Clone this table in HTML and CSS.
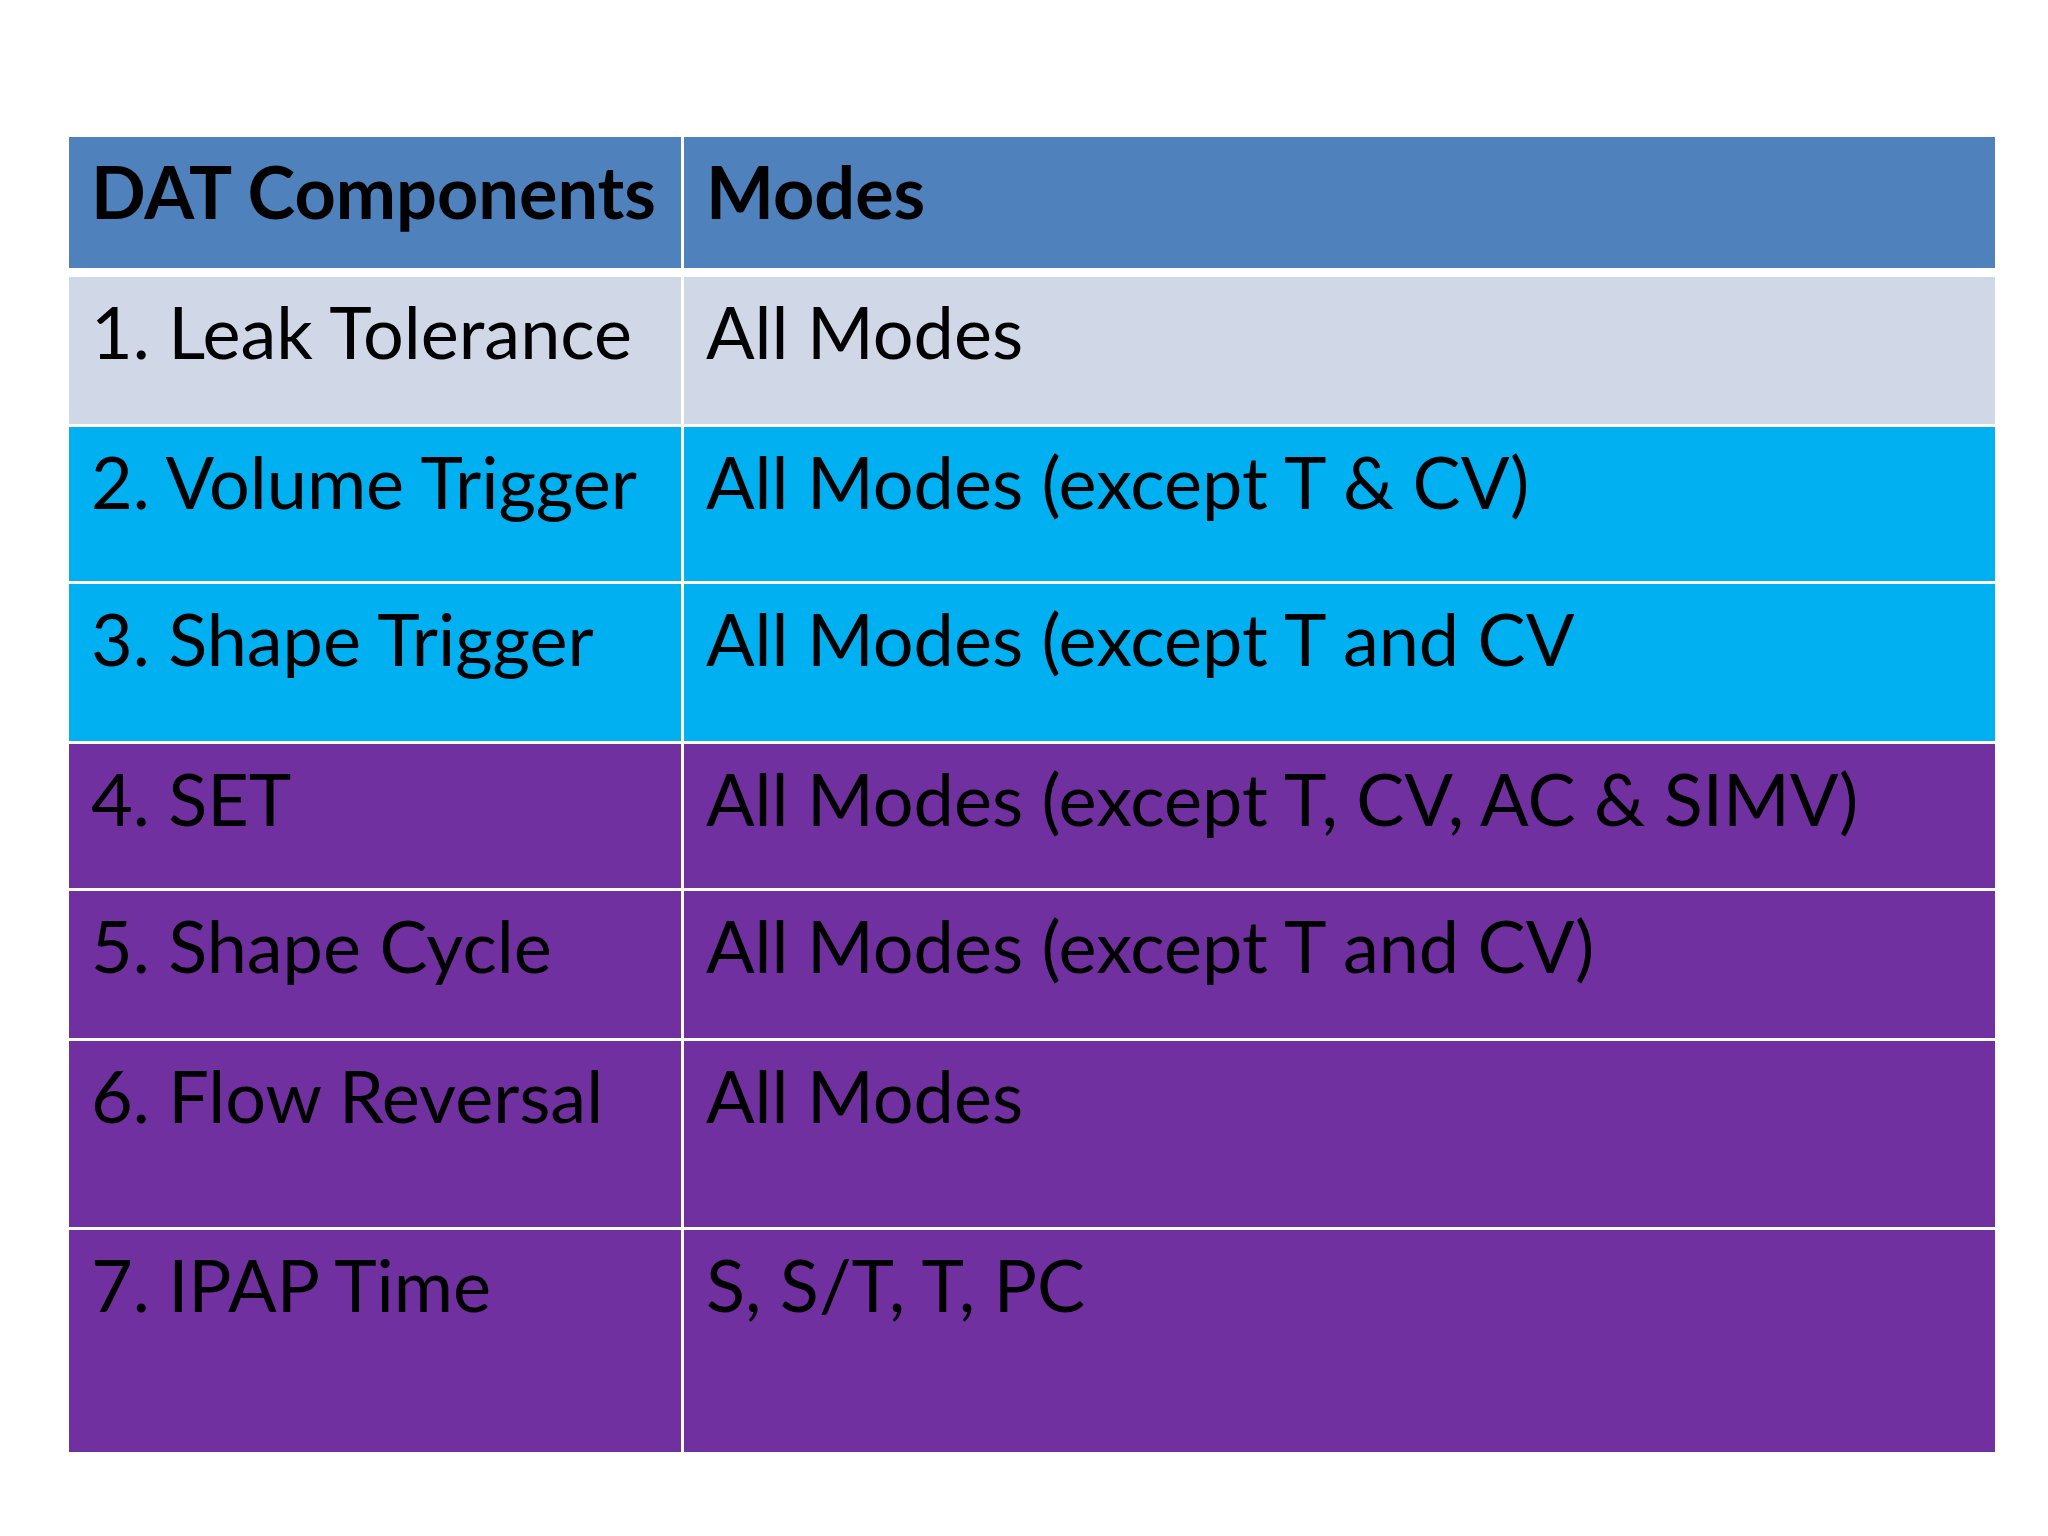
FILE: index.html
```html
<!DOCTYPE html>
<html lang="en">
<head>
<meta charset="utf-8">
<title>DAT Components</title>
<link rel="stylesheet" href="styles.css">
</head>
<body>
<div class="table">
  <div class="row head h-head">
    <div class="cell">DAT Components</div>
    <div class="cell">Modes</div>
  </div>
  <div class="row light h-1">
    <div class="cell">1. Leak Tolerance</div>
    <div class="cell">All Modes</div>
  </div>
  <div class="row cyan h-2">
    <div class="cell">2. Volume Trigger</div>
    <div class="cell">All Modes (except T &amp; CV)</div>
  </div>
  <div class="row cyan h-3">
    <div class="cell">3. Shape Trigger</div>
    <div class="cell">All Modes (except T and CV</div>
  </div>
  <div class="row purple h-4">
    <div class="cell">4. SET</div>
    <div class="cell">All Modes (except T, CV, AC &amp; SIMV)</div>
  </div>
  <div class="row purple h-5">
    <div class="cell">5. Shape Cycle</div>
    <div class="cell">All Modes (except T and CV)</div>
  </div>
  <div class="row purple h-6">
    <div class="cell">6. Flow Reversal</div>
    <div class="cell">All Modes</div>
  </div>
  <div class="row purple h-7">
    <div class="cell">7. IPAP Time</div>
    <div class="cell">S, S/T, T, PC</div>
  </div>
</div>
</body>
</html>
```
FILE: styles.css
```css
html, body {
  margin: 0;
  padding: 0;
  background: #ffffff;
}
body {
  padding: 137px 0 0 69px;
  font-family: "Lato", "Liberation Sans", sans-serif;
  color: #000;
}
.table {
  width: 1926px;
  display: flex;
  flex-direction: column;
  gap: 3px;
}
.row {
  display: grid;
  grid-template-columns: 612px 1311px;
  column-gap: 3px;
}
.cell {
  font-size: 72px;
  line-height: 86px;
  padding: 11px 0 0 22px;
  white-space: nowrap;
}
.head .cell { background: #4f81bd; font-weight: 700; }
.light .cell { background: #d0d8e8; }
.cyan .cell { background: #00b0f0; }
.purple .cell { background: #7030a0; }
.h-head { height: 131px; margin-bottom: 6px; }
.h-1 { height: 147px; }
.h-2 { height: 154px; }
.h-3 { height: 157px; }
.h-4 { height: 144px; }
.h-5 { height: 147px; }
.h-6 { height: 186px; }
.h-7 { height: 222px; }
```
